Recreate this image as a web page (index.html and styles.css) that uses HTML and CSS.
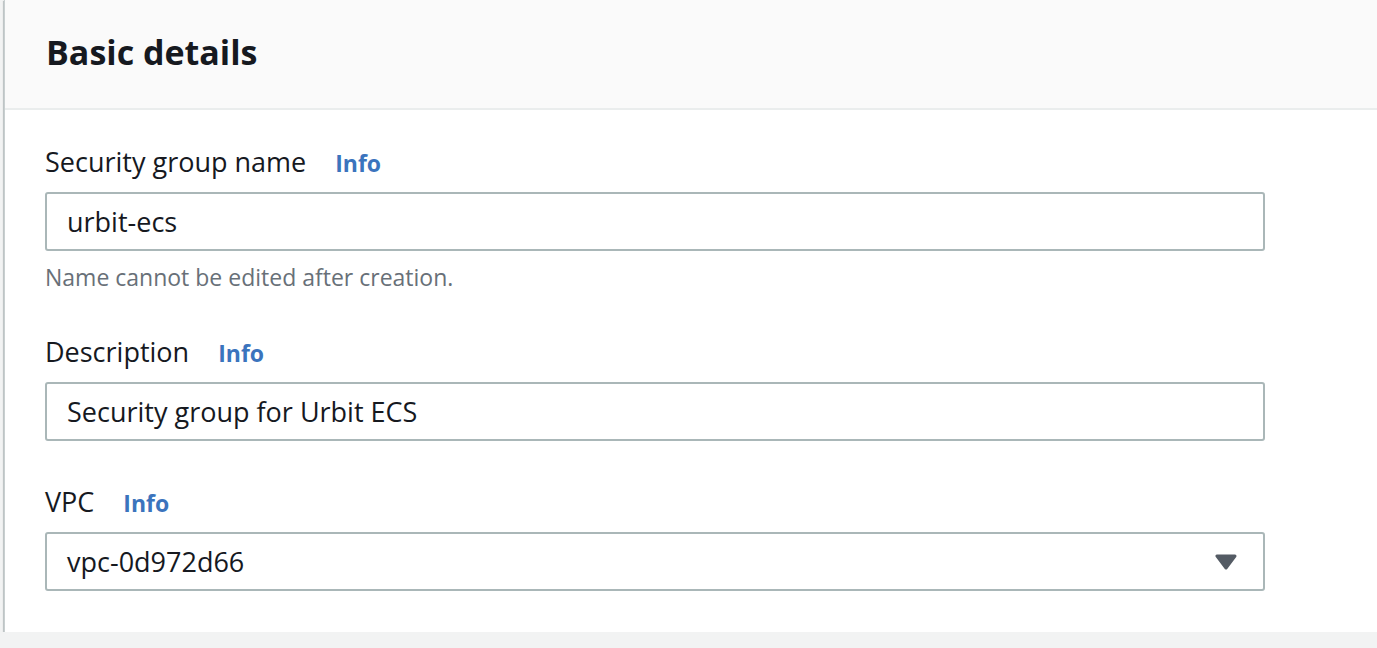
FILE: index.html
```html
<!DOCTYPE html>
<html>
<head>
<meta charset="utf-8">
<link rel="stylesheet" href="styles.css">
</head>
<body>
<div class="panel">
  <div class="panel-header">
    <h2 class="panel-title">Basic details</h2>
  </div>
  <div class="panel-body">
    <div class="field">
      <div class="label-row"><span class="label">Security group name</span><a class="info">Info</a></div>
      <div class="input">urbit-ecs</div>
      <div class="hint">Name cannot be edited after creation.</div>
    </div>
    <div class="field">
      <div class="label-row"><span class="label">Description</span><a class="info">Info</a></div>
      <div class="input">Security group for Urbit ECS</div>
    </div>
    <div class="field">
      <div class="label-row"><span class="label">VPC</span><a class="info">Info</a></div>
      <div class="input select">
        <span>vpc-0d972d66</span>
        <svg class="caret" width="22" height="16" viewBox="0 0 22 16"><path d="M2 2 L20 2 L11 14 Z" fill="#545b64" stroke="#545b64" stroke-width="3" stroke-linejoin="round"/></svg>
      </div>
    </div>
  </div>
</div>
</body>
</html>
```
FILE: styles.css
```css
html, body {
  margin: 0;
  padding: 0;
}
body {
  background: #f2f3f3;
  font-family: "Open Sans", "Noto Sans", "Liberation Sans", sans-serif;
  color: #16191f;
  overflow: hidden;
}
.panel {
  margin-left: 4px;
  margin-right: -20px;
  background: #fff;
  border-left: 1px solid #c8cfd0;
  box-shadow: 0 1px 1px 0 rgba(0, 28, 36, 0.45), -1px 1px 1px 0 rgba(0, 28, 36, 0.15);
}
.panel-header {
  background: #fafafa;
  border-bottom: 2px solid #eaeded;
  height: 108px;
  display: flex;
  align-items: center;
  padding-left: 41px;
}
.panel-title {
  margin: 0;
  font-size: 34px;
  font-weight: 700;
  line-height: 44px;
  margin-top: -5px;
}
.panel-body {
  padding: 35px 0 41px 40px;
}
.field + .field {
  margin-top: 44px;
}
.label-row {
  display: flex;
  align-items: baseline;
  height: 34px;
  line-height: 34px;
  margin-bottom: 13px;
}
.label {
  font-size: 27px;
}
.info {
  margin-left: 29px;
  font-size: 23px;
  font-weight: 700;
  color: #3b74bd;
}
.input {
  box-sizing: border-box;
  width: 1220px;
  height: 59px;
  border: 2px solid #aab7b8;
  border-radius: 3px;
  padding: 0 20px;
  display: flex;
  align-items: center;
  font-size: 27px;
}
.select {
  justify-content: space-between;
  padding-right: 26px;
}
.caret {
  display: block;
}
.hint {
  margin-top: 12px;
  font-size: 23px;
  line-height: 28px;
  color: #687078;
}
```
